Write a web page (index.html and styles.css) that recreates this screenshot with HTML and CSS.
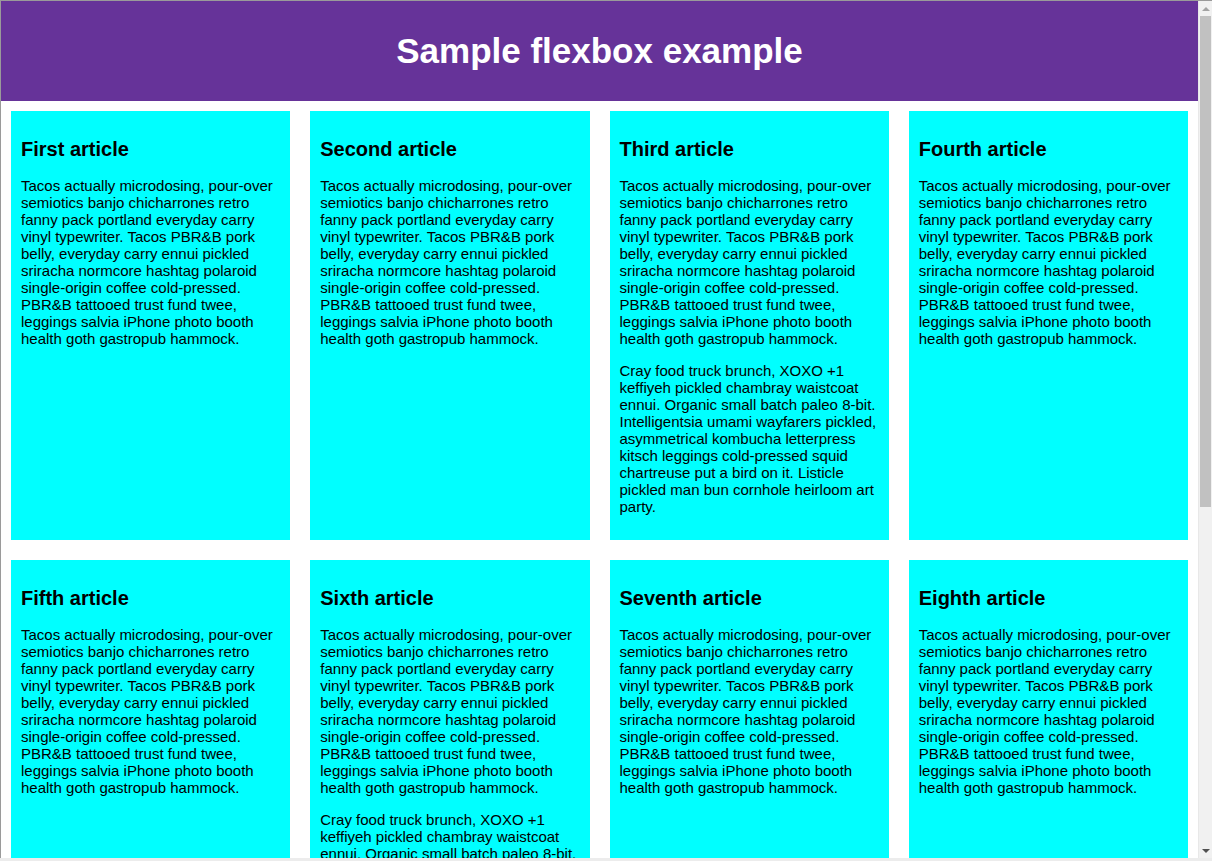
FILE: index.html
```html
<!DOCTYPE html>
<html lang="en">
<head>
    <meta charset="UTF-8">
    <meta name="viewport" content="width=device-width, initial-scale=1.0">
    <title>Sample flexbox example</title>
    <link rel="stylesheet" href="styles.css">
</head>
<body>
    <div class="window">
        <div class="pane">
            <div class="viewport">
                <header>
                    <h1>Sample flexbox example</h1>
                </header>
                <section>
                    <article>
                        <h2>First article</h2>
                        <p>Tacos actually microdosing, pour-over semiotics banjo chicharrones retro fanny pack portland everyday carry vinyl typewriter. Tacos PBR&amp;B pork belly, everyday carry ennui pickled sriracha normcore hashtag polaroid single-origin coffee cold-pressed. PBR&amp;B tattooed trust fund twee, leggings salvia iPhone photo booth health goth gastropub hammock.</p>
                    </article>
                    <article>
                        <h2>Second article</h2>
                        <p>Tacos actually microdosing, pour-over semiotics banjo chicharrones retro fanny pack portland everyday carry vinyl typewriter. Tacos PBR&amp;B pork belly, everyday carry ennui pickled sriracha normcore hashtag polaroid single-origin coffee cold-pressed. PBR&amp;B tattooed trust fund twee, leggings salvia iPhone photo booth health goth gastropub hammock.</p>
                    </article>
                    <article>
                        <h2>Third article</h2>
                        <p>Tacos actually microdosing, pour-over semiotics banjo chicharrones retro fanny pack portland everyday carry vinyl typewriter. Tacos PBR&amp;B pork belly, everyday carry ennui pickled sriracha normcore hashtag polaroid single-origin coffee cold-pressed. PBR&amp;B tattooed trust fund twee, leggings salvia iPhone photo booth health goth gastropub hammock.</p>
                        <p>Cray food truck brunch, XOXO +1 keffiyeh pickled chambray waistcoat ennui. Organic small batch paleo 8-bit. Intelligentsia umami wayfarers pickled, asymmetrical kombucha letterpress kitsch leggings cold-pressed squid chartreuse put a bird on it. Listicle pickled man bun cornhole heirloom art party.</p>
                    </article>
                    <article>
                        <h2>Fourth article</h2>
                        <p>Tacos actually microdosing, pour-over semiotics banjo chicharrones retro fanny pack portland everyday carry vinyl typewriter. Tacos PBR&amp;B pork belly, everyday carry ennui pickled sriracha normcore hashtag polaroid single-origin coffee cold-pressed. PBR&amp;B tattooed trust fund twee, leggings salvia iPhone photo booth health goth gastropub hammock.</p>
                    </article>
                    <article>
                        <h2>Fifth article</h2>
                        <p>Tacos actually microdosing, pour-over semiotics banjo chicharrones retro fanny pack portland everyday carry vinyl typewriter. Tacos PBR&amp;B pork belly, everyday carry ennui pickled sriracha normcore hashtag polaroid single-origin coffee cold-pressed. PBR&amp;B tattooed trust fund twee, leggings salvia iPhone photo booth health goth gastropub hammock.</p>
                    </article>
                    <article>
                        <h2>Sixth article</h2>
                        <p>Tacos actually microdosing, pour-over semiotics banjo chicharrones retro fanny pack portland everyday carry vinyl typewriter. Tacos PBR&amp;B pork belly, everyday carry ennui pickled sriracha normcore hashtag polaroid single-origin coffee cold-pressed. PBR&amp;B tattooed trust fund twee, leggings salvia iPhone photo booth health goth gastropub hammock.</p>
                        <p>Cray food truck brunch, XOXO +1 keffiyeh pickled chambray waistcoat ennui. Organic small batch paleo 8-bit. Intelligentsia umami wayfarers pickled, asymmetrical kombucha letterpress kitsch leggings cold-pressed squid chartreuse put a bird on it. Listicle pickled man bun cornhole heirloom art party.</p>
                    </article>
                    <article>
                        <h2>Seventh article</h2>
                        <p>Tacos actually microdosing, pour-over semiotics banjo chicharrones retro fanny pack portland everyday carry vinyl typewriter. Tacos PBR&amp;B pork belly, everyday carry ennui pickled sriracha normcore hashtag polaroid single-origin coffee cold-pressed. PBR&amp;B tattooed trust fund twee, leggings salvia iPhone photo booth health goth gastropub hammock.</p>
                    </article>
                    <article>
                        <h2>Eighth article</h2>
                        <p>Tacos actually microdosing, pour-over semiotics banjo chicharrones retro fanny pack portland everyday carry vinyl typewriter. Tacos PBR&amp;B pork belly, everyday carry ennui pickled sriracha normcore hashtag polaroid single-origin coffee cold-pressed. PBR&amp;B tattooed trust fund twee, leggings salvia iPhone photo booth health goth gastropub hammock.</p>
                    </article>
                </section>
            </div>
            <div class="scrollbar">
                <div class="arrow up"></div>
                <div class="track">
                    <div class="thumb"></div>
                </div>
                <div class="arrow down"></div>
            </div>
        </div>
        <div class="hbar"></div>
    </div>
</body>
</html>
```

FILE: styles.css
```css
html {
    font-family: "Liberation Sans", Arial, sans-serif;
}

body {
    margin: 0;
    height: 100vh;
    overflow: hidden;
    background-color: #ffffff;
}

.window {
    display: flex;
    flex-direction: column;
    height: 100%;
}

.pane {
    display: flex;
    flex: 1;
    min-height: 0;
    border-top: 1px solid #9a9a9a;
}

.viewport {
    flex: 1;
    min-width: 0;
    overflow: hidden;
    border-left: 1px solid #9a9a9a;
}

header {
    background: #663399;
    height: 100px;
}

h1 {
    text-align: center;
    color: white;
    line-height: 100px;
    margin: 0;
    font-size: 35px;
}

section {
    display: flex;
    flex-wrap: wrap;
}

article {
    flex: 1 200px;
    padding: 10px;
    margin: 10px;
    background: aqua;
}

h2 {
    font-size: 20px;
    margin: 16.6px 0;
}

p {
    font-size: 15px;
    margin: 15px 0;
}

/* fake browser scrollbars */
.scrollbar {
    width: 14px;
    display: flex;
    flex-direction: column;
    background: #f1f1f1;
    border-left: 1px solid #e8e8e8;
    box-sizing: border-box;
}

.arrow {
    height: 15px;
    display: flex;
    align-items: center;
    justify-content: center;
}

.arrow::before {
    content: "";
    border-left: 4px solid transparent;
    border-right: 4px solid transparent;
}

.arrow.up::before {
    border-bottom: 4px solid #a3a3a3;
}

.arrow.down::before {
    border-top: 4px solid #505050;
}

.track {
    flex: 1;
    padding-right: 1px;
    padding-left: 1px;
}

.thumb {
    height: 491px;
    background: #c1c1c1;
}

.hbar {
    height: 3px;
    background: #ececec;
}
```
